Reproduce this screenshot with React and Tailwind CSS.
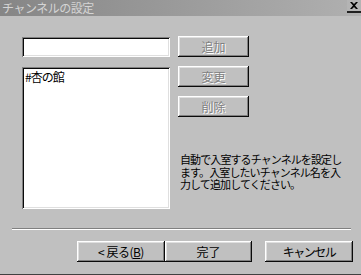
import React from "react";

const font = { fontFamily: '"Noto Sans CJK JP", "Noto Sans", sans-serif' };

function Btn({ children, disabled, className = "" }) {
  return (
    <button
      type="button"
      className={
        "flex items-center justify-center bg-[#c0c0c0] text-[12px] leading-none shadow-[inset_-1px_-1px_#0a0a0a,inset_1px_1px_#ffffff,inset_-2px_-2px_#808080,inset_2px_2px_#dfdfdf] " +
        (disabled ? "text-[#808080] [text-shadow:1px_1px_#ffffff] " : "text-black ") +
        className
      }
    >
      {children}
    </button>
  );
}

export default function App() {
  return (
    <div
      className="w-[361px] h-[275px] bg-[#c0c0c0] flex flex-col border-b border-[#404040] overflow-hidden"
      style={font}
    >
      {/* タイトルバー */}
      <div className="h-[16px] flex items-center justify-between bg-gradient-to-r from-[#868686] to-[#b0b0b0]">
        <span className="pl-[2px] text-[12px] leading-none tracking-[-0.5px] text-[#d4d4d4]">チャンネルの設定</span>
        <div className="w-[14px] h-[13px] self-start flex items-center justify-center bg-[#b4b4b4] border-b-2 border-[#202020]">
          <svg width="8" height="7" viewBox="0 0 8 7">
            <path d="M0 0h2l2 2 2-2h2L5 3.5 8 7H6L4 5 2 7H0l3-3.5z" fill="#000" />
          </svg>
        </div>
      </div>

      <div className="flex pt-[21px] pl-[22px]">
        <div className="w-[148px] shrink-0 flex flex-col gap-[10px]">
          <div className="h-[20px] bg-white shadow-[inset_1px_1px_#808080,inset_-1px_-1px_#ffffff,inset_2px_2px_#0a0a0a,inset_-2px_-2px_#dfdfdf]" />
          <div className="h-[142px] bg-white px-[3px] pt-[3px] text-[12px] leading-[14px] tracking-[-1px] text-black shadow-[inset_1px_1px_#808080,inset_-1px_-1px_#ffffff,inset_2px_2px_#0a0a0a,inset_-2px_-2px_#dfdfdf]">
            #杏の館
          </div>
        </div>
        <div className="ml-[8px] -mt-[1px] flex flex-col shrink-0">
          <div className="flex flex-col gap-[9px]">
            <Btn disabled className="w-[71px] h-[21px]">追加</Btn>
            <Btn disabled className="w-[71px] h-[21px]">変更</Btn>
            <Btn disabled className="w-[71px] h-[21px]">削除</Btn>
          </div>
          <p className="mt-[36px] ml-[2px] text-[11px] leading-[12.5px] tracking-[-0.9px] text-black whitespace-nowrap">
            自動で入室するチャンネルを設定し
            <br />
            ます。入室したいチャンネル名を入
            <br />
            力して追加してください。
          </p>
        </div>
      </div>

      <div className="mt-auto">
        <div className="ml-[12px] w-[339px] border-t border-[#808080] border-b border-b-white" />
        <div className="flex pl-[77px] pt-[11px] pb-[12px]">
          <Btn className="w-[88px] h-[21px] tracking-[-0.5px]">
            &lt;&nbsp;戻る(<span className="underline">B</span>)
          </Btn>
          <Btn className="w-[87px] h-[21px]">完了</Btn>
          <Btn className="ml-[13px] w-[88px] h-[21px] tracking-[-1.5px]">キャンセル</Btn>
        </div>
      </div>
    </div>
  );
}
